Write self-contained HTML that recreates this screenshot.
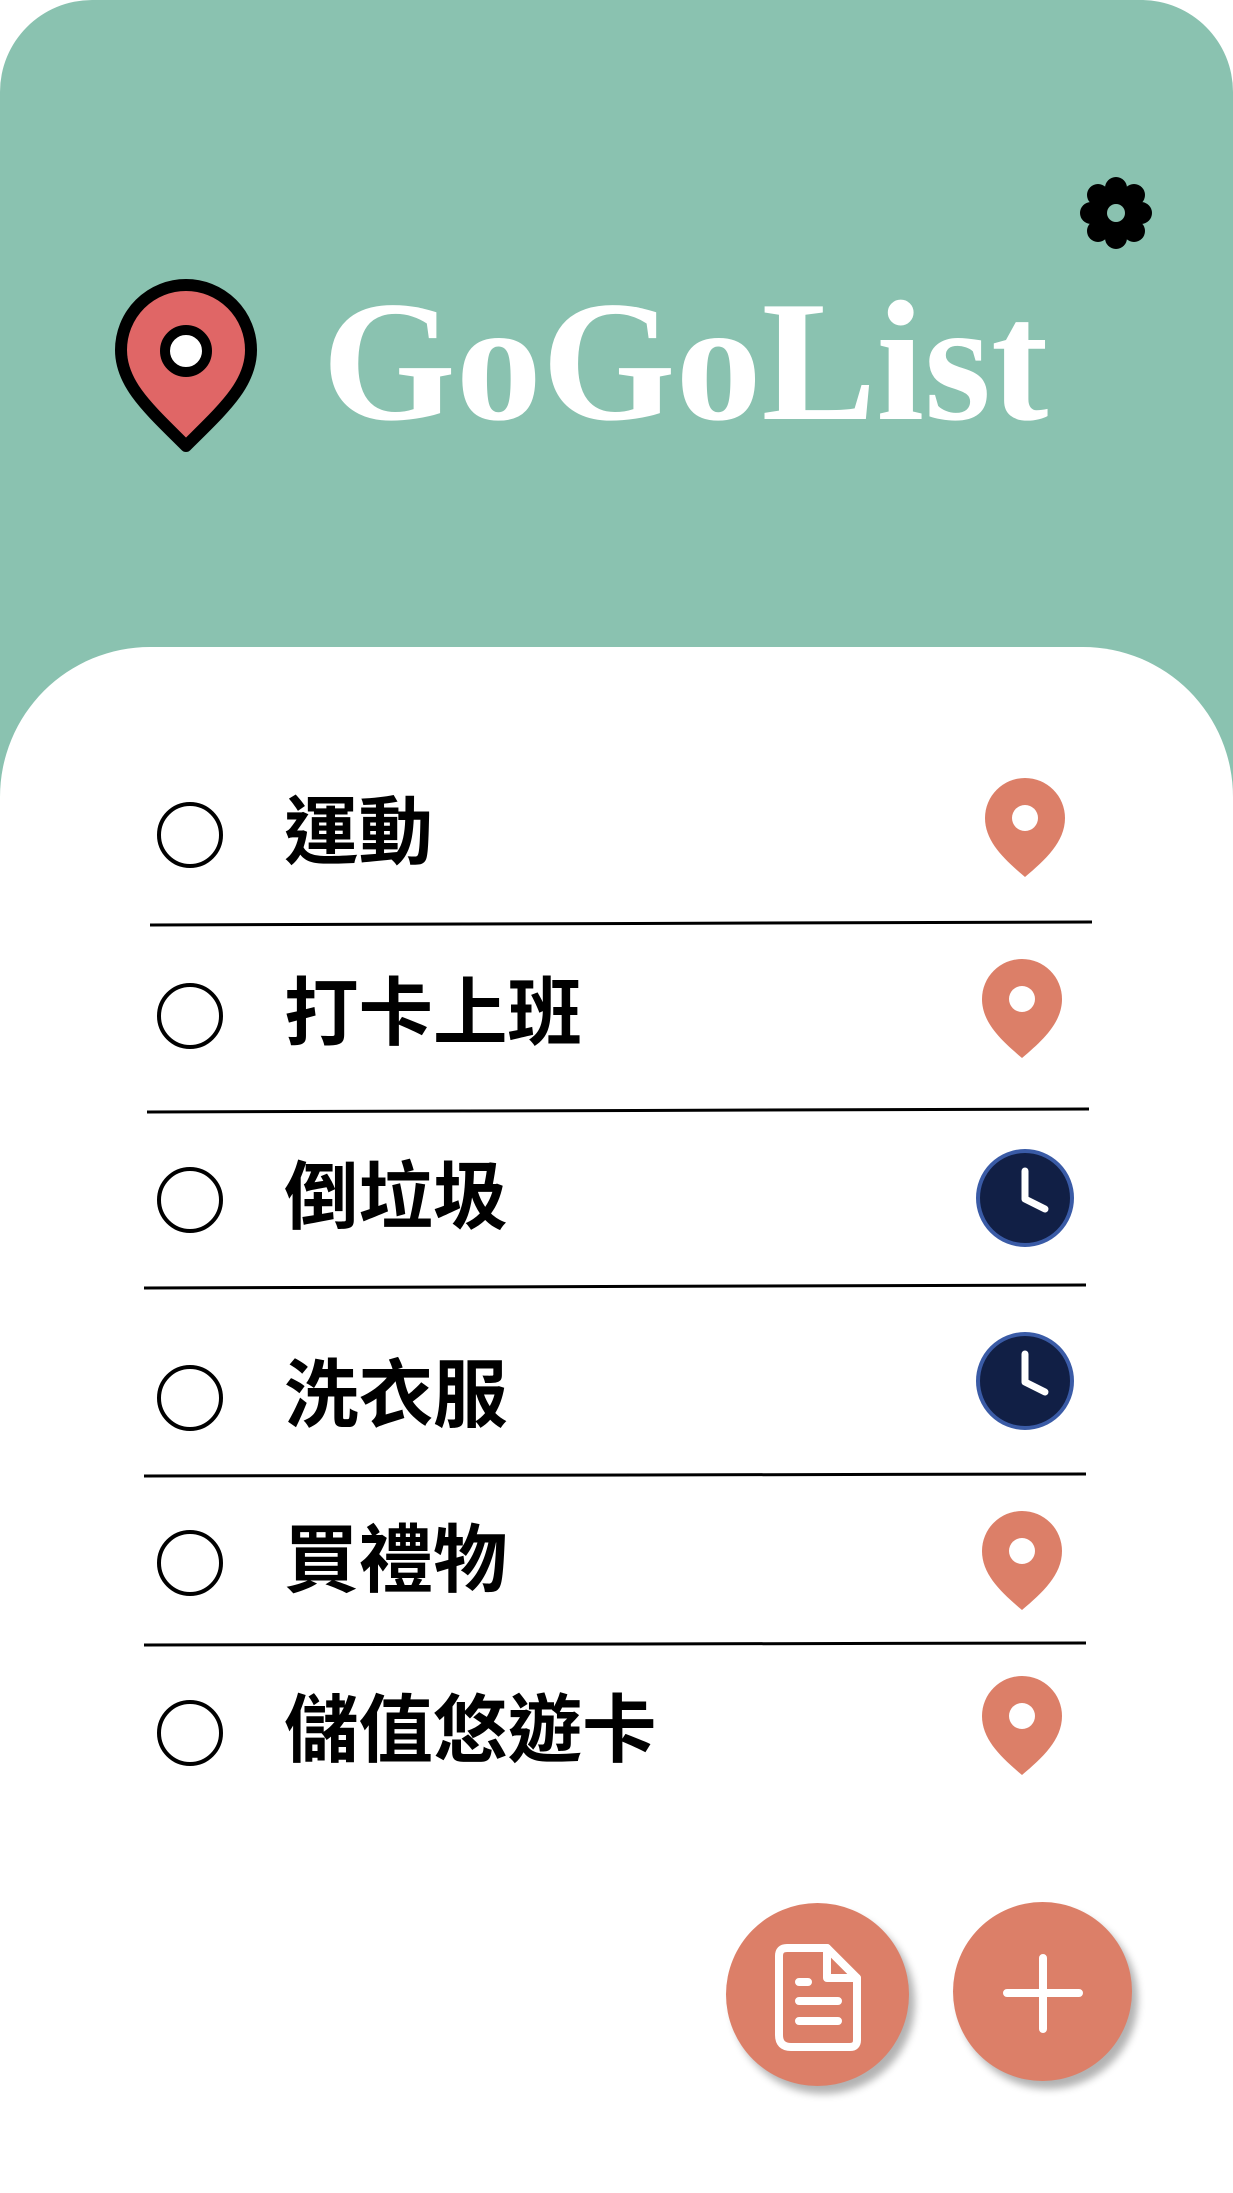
<!DOCTYPE html>
<html><head><meta charset="utf-8"><style>
html,body{margin:0;padding:0;}
body{width:1233px;height:2193px;background:#fff;position:relative;overflow:hidden;font-family:"Liberation Sans","Noto Sans CJK TC",sans-serif;}
.hdr{position:absolute;left:0;top:0;width:1233px;height:820px;background:#8AC2B0;border-radius:92px 92px 0 0;}
.card{position:absolute;left:0;top:647px;width:1233px;height:1546px;background:#fff;border-radius:150px 150px 0 0;}
.title{position:absolute;left:322px;top:262px;font-family:"Liberation Serif",serif;font-weight:bold;font-size:172px;line-height:200px;color:#fff;letter-spacing:0px;}
.row{position:absolute;left:0;width:1233px;height:0;}
.chk{position:absolute;left:157px;width:58px;height:58px;border:4px solid #000;border-radius:50%;margin-top:-33px;}
.txt{position:absolute;left:284px;font-size:74.5px;font-weight:bold;line-height:90px;margin-top:-47px;color:#000;white-space:nowrap;}
.fab{position:absolute;border-radius:50%;background:#DC7F68;box-shadow:6px 8px 8px rgba(0,0,0,0.3);}
</style></head><body>
<div class="hdr"></div>
<div class="card"></div>

<svg style="position:absolute;left:0;top:0" width="1233" height="2193">
  <g fill="#000">
    <circle cx="1116" cy="213" r="24"/>
    <circle cx="1116" cy="188" r="11"/><circle cx="1116" cy="238" r="11"/>
    <circle cx="1091" cy="213" r="11"/><circle cx="1141" cy="213" r="11"/>
    <circle cx="1098" cy="195" r="11"/><circle cx="1134" cy="195" r="11"/>
    <circle cx="1098" cy="231" r="11"/><circle cx="1134" cy="231" r="11"/>
  </g>
  <circle cx="1116" cy="213" r="9" fill="#8AC2B0"/>
  <path d="M186,446 C150,410 121,385 121,350 A65,65 0 1 1 251,350 C251,385 222,410 186,446Z" fill="#E06666" stroke="#000" stroke-width="12" stroke-linejoin="round"/>
  <circle cx="186" cy="351" r="21" fill="#fff" stroke="#000" stroke-width="10"/>

  <g fill="#DC7F68">
    <path d="M1025,877 C1005,860 985,842 985,818 A40,40 0 1 1 1065,818 C1065,842 1045,860 1025,877Z"/>
    <path d="M1022,1058 C1002,1041 982,1023 982,999 A40,40 0 1 1 1062,999 C1062,1023 1042,1041 1022,1058Z"/>
    <path d="M1022,1610 C1002,1593 982,1575 982,1551 A40,40 0 1 1 1062,1551 C1062,1575 1042,1593 1022,1610Z"/>
    <path d="M1022,1775 C1002,1758 982,1740 982,1716 A40,40 0 1 1 1062,1716 C1062,1740 1042,1758 1022,1775Z"/>
  </g>
  <g fill="#fff">
    <circle cx="1025" cy="818" r="13"/>
    <circle cx="1022" cy="999" r="13"/>
    <circle cx="1022" cy="1551" r="13"/>
    <circle cx="1022" cy="1716" r="13"/>
  </g>
  <g>
    <circle cx="1025" cy="1198" r="47" fill="#111F45" stroke="#3A5BA6" stroke-width="4"/>
    <path d="M1025,1171 V1199 L1045,1209" fill="none" stroke="#fff" stroke-width="7" stroke-linecap="round" stroke-linejoin="round"/>
    <circle cx="1025" cy="1381" r="47" fill="#111F45" stroke="#3A5BA6" stroke-width="4"/>
    <path d="M1025,1354 V1382 L1045,1392" fill="none" stroke="#fff" stroke-width="7" stroke-linecap="round" stroke-linejoin="round"/>
  </g>
  <g stroke="#000" stroke-width="3">
    <line x1="150" y1="925" x2="1092" y2="922"/>
    <line x1="147" y1="1112" x2="1089" y2="1109"/>
    <line x1="144" y1="1288" x2="1086" y2="1285"/>
    <line x1="144" y1="1476" x2="1086" y2="1474"/>
    <line x1="144" y1="1645" x2="1086" y2="1643"/>
  </g>
</svg>

<div class="title">GoGoList</div>

<div class="row" style="top:835px"><div class="chk"></div><div class="txt">運動</div></div>
<div class="row" style="top:1016px"><div class="chk"></div><div class="txt">打卡上班</div></div>
<div class="row" style="top:1200px"><div class="chk"></div><div class="txt">倒垃圾</div></div>
<div class="row" style="top:1398px"><div class="chk"></div><div class="txt">洗衣服</div></div>
<div class="row" style="top:1563px"><div class="chk"></div><div class="txt">買禮物</div></div>
<div class="row" style="top:1733px"><div class="chk"></div><div class="txt">儲值悠遊卡</div></div>

<div class="fab" style="left:726px;top:1903px;width:183px;height:183px;"></div>
<div class="fab" style="left:953px;top:1902px;width:179px;height:179px;"></div>
<svg style="position:absolute;left:0;top:0" width="1233" height="2193">
  <g fill="none" stroke="#fff" stroke-width="8" stroke-linecap="round" stroke-linejoin="round">
    <path d="M787,1948 H827 L857,1978 V2040 Q857,2047 850,2047 H791 Q779,2047 779,2035 V1956 Q779,1948 787,1948Z"/>
    <path d="M827,1948 V1978 H857"/>
    <path d="M799,1982 H808 M799,2001 H838 M799,2021 H838"/>
    <path d="M1043,1958 V2029 M1007,1993 H1079"/>
  </g>
</svg>
</body></html>
